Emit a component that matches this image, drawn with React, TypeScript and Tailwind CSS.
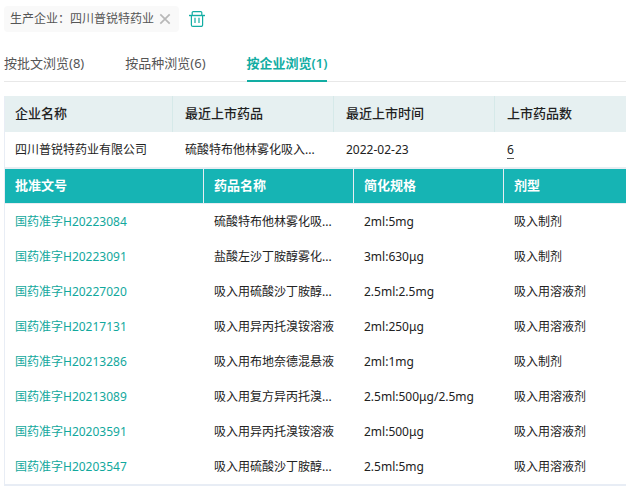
import { useState } from "react";

const tabs = [
  { key: "approval", label: "按批文浏览", count: 8 },
  { key: "variety", label: "按品种浏览", count: 6 },
  { key: "company", label: "按企业浏览", count: 1 },
];

const approvals = [
  { code: "国药准字H20223084", name: "硫酸特布他林雾化吸...", spec: "2ml:5mg", form: "吸入制剂" },
  { code: "国药准字H20223091", name: "盐酸左沙丁胺醇雾化...", spec: "3ml:630μg", form: "吸入制剂" },
  { code: "国药准字H20227020", name: "吸入用硫酸沙丁胺醇...", spec: "2.5ml:2.5mg", form: "吸入用溶液剂" },
  { code: "国药准字H20217131", name: "吸入用异丙托溴铵溶液", spec: "2ml:250μg", form: "吸入用溶液剂" },
  { code: "国药准字H20213286", name: "吸入用布地奈德混悬液", spec: "2ml:1mg", form: "吸入制剂" },
  { code: "国药准字H20213089", name: "吸入用复方异丙托溴...", spec: "2.5ml:500μg/2.5mg", form: "吸入用溶液剂" },
  { code: "国药准字H20203591", name: "吸入用异丙托溴铵溶液", spec: "2ml:500μg", form: "吸入用溶液剂" },
  { code: "国药准字H20203547", name: "吸入用硫酸沙丁胺醇...", spec: "2.5ml:5mg", form: "吸入用溶液剂" },
];

function CloseIcon() {
  return (
    <svg width="12" height="12" viewBox="0 0 12 12" fill="none" stroke="#b8b8b8" strokeWidth="1.7">
      <path d="M1.3 1.3l9.4 9.4M10.7 1.3L1.3 10.7" />
    </svg>
  );
}

function TrashIcon() {
  return (
    <svg width="16" height="16" viewBox="0 0 16 16" fill="none" stroke="#12ada3" strokeWidth="1.2">
      <path d="M3.2 4.5V1.6a1 1 0 0 1 1-1h7.6a1 1 0 0 1 1 1v2.9" />
      <path d="M0 4.5h16" strokeWidth="1.4" />
      <path d="M2.4 4.5v9.4a1.5 1.5 0 0 0 1.5 1.5h8.2a1.5 1.5 0 0 0 1.5-1.5V4.5" />
      <path d="M6 6.8v5.2M10 6.8v5.2" />
    </svg>
  );
}

function CompanyTable() {
  return (
    <table className="w-full table-fixed border-separate border-spacing-0 text-left">
      <colgroup>
        <col className="w-[168px]" />
        <col className="w-[161px]" />
        <col className="w-[161px]" />
        <col />
      </colgroup>
      <thead>
        <tr className="h-9 bg-[#e6f0f1] text-[13px] text-[#222]">
          <th className="border-r border-[#d6e9e9] pl-[10px] font-medium">企业名称</th>
          <th className="border-r border-[#d6e9e9] pl-3 font-medium">最近上市药品</th>
          <th className="border-r border-[#d6e9e9] pl-3 font-medium">最近上市时间</th>
          <th className="pl-3 font-medium">上市药品数</th>
        </tr>
      </thead>
      <tbody>
        <tr className="h-[35px]">
          <td className="pl-[10px]">四川普锐特药业有限公司</td>
          <td className="pl-3">硫酸特布他林雾化吸入...</td>
          <td className="pl-3">2022-02-23</td>
          <td className="pl-3">
            <a href="#approvals" className="border-b border-[#555]">6</a>
          </td>
        </tr>
      </tbody>
    </table>
  );
}

function ApprovalTable() {
  return (
    <table id="approvals" className="w-full table-fixed border-separate border-spacing-0 text-left">
      <colgroup>
        <col className="w-[199px]" />
        <col className="w-[150px]" />
        <col className="w-[150px]" />
        <col />
      </colgroup>
      <thead>
        <tr className="h-[35px] bg-[#16b4b4] text-[13px] text-white">
          <th className="border-b border-r border-[#e8edf2] pl-[10px] font-bold">批准文号</th>
          <th className="border-b border-r border-[#e8edf2] pl-[10px] font-bold">药品名称</th>
          <th className="border-b border-r border-[#e8edf2] pl-[10px] font-bold">简化规格</th>
          <th className="border-b border-[#e8edf2] pl-[10px] font-bold">剂型</th>
        </tr>
      </thead>
      <tbody>
        {approvals.map((item) => (
          <tr key={item.code} className="h-[35px]">
            <td className="pl-[10px]">
              <a href={`#${item.code}`} className="text-[#12a89d] hover:underline">{item.code}</a>
            </td>
            <td className="pl-[10px]">{item.name}</td>
            <td className="pl-[10px]">{item.spec}</td>
            <td className="pl-[10px]">{item.form}</td>
          </tr>
        ))}
      </tbody>
    </table>
  );
}

export default function App() {
  const [active, setActive] = useState("company");

  return (
    <div className="bg-white pl-1 pt-[6px] font-['Noto_Sans','Noto_Sans_CJK_SC',sans-serif] text-xs text-[#222]">
      <div className="flex items-center gap-[10px]">
        <span className="flex h-[26px] items-center gap-[5px] rounded-sm bg-[#f9f9f9] pl-[6px] pr-2 text-[#555]">
          生产企业：四川普锐特药业
          <button type="button" aria-label="移除">
            <CloseIcon />
          </button>
        </span>
        <button type="button" aria-label="清空">
          <TrashIcon />
        </button>
      </div>

      <div className="mt-4 flex gap-[41px] border-b border-[#e8e8e8]">
        {tabs.map((tab) => (
          <button
            key={tab.key}
            type="button"
            onClick={() => setActive(tab.key)}
            className={
              tab.key === active
                ? "-mb-px h-[34px] border-b-2 border-[#12ada3] text-[13px] font-semibold text-[#12ada3]"
                : "-mb-px h-[34px] border-b-2 border-transparent text-[13px] text-[#555]"
            }
          >
            {tab.label}({tab.count})
          </button>
        ))}
      </div>

      <div className="mt-[14px] border-b-2 border-l border-[#e8edf5]">
        <CompanyTable />
        <div className="border-t-2 border-[#e8edf2]">
          <ApprovalTable />
        </div>
      </div>
    </div>
  );
}
